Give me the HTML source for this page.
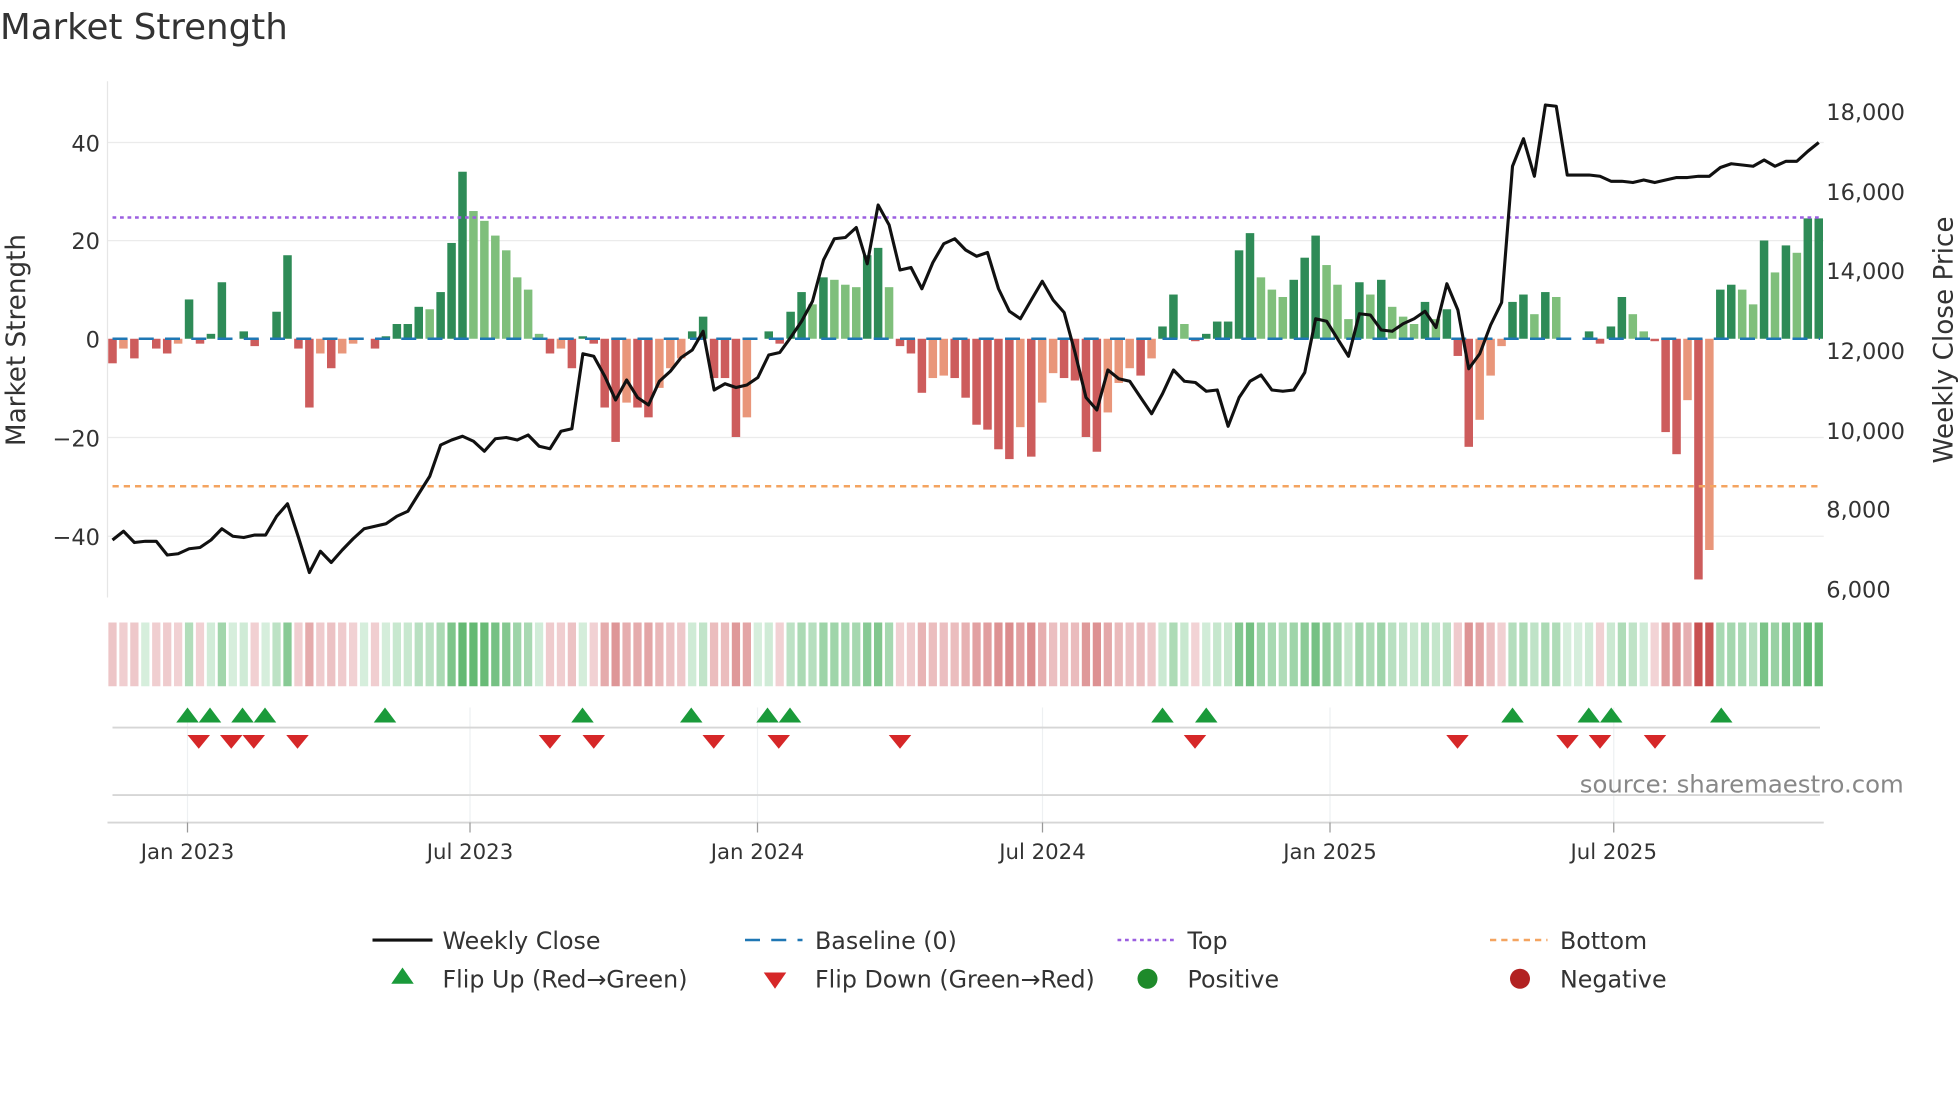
<!DOCTYPE html>
<html><head><meta charset="utf-8"><style>
html,body{margin:0;padding:0;background:#fff;}
svg{display:block;font-family:"DejaVu Sans","Liberation Sans",sans-serif;}
</style></head><body>
<svg id="s" width="1960" height="1102" viewBox="0 0 1568 881.6" xmlns="http://www.w3.org/2000/svg">
<rect width="1568" height="882" fill="#fff"/>
<text x="0" y="31" font-size="28.5" fill="#333">Market Strength</text>
<g id="grid" stroke="#ebebeb" stroke-width="1">
<line x1="86" x2="1459" y1="114" y2="114"/><line x1="86" x2="1459" y1="192.5" y2="192.5"/>
<line x1="86" x2="1459" y1="350" y2="350"/><line x1="86" x2="1459" y1="429" y2="429"/>
</g>
<line x1="86" x2="86" y1="65" y2="478" stroke="#e6e6e6"/>
<g font-size="18" fill="#333" text-anchor="end">
<text x="80" y="121">40</text><text x="80" y="199">20</text><text x="80" y="278">0</text>
<text x="80" y="357">−20</text><text x="80" y="436">−40</text>
</g>
<g font-size="18" fill="#333">
<text x="1461" y="96">18,000</text><text x="1461" y="160">16,000</text><text x="1461" y="223">14,000</text>
<text x="1461" y="287">12,000</text><text x="1461" y="351">10,000</text><text x="1461" y="414">8,000</text><text x="1461" y="478">6,000</text>
</g>
<text transform="translate(20,272) rotate(-90)" font-size="21" fill="#333" text-anchor="middle">Market Strength</text>
<text transform="translate(1562,272) rotate(-90)" font-size="21" fill="#333" text-anchor="middle">Weekly Close Price</text>
<g id="bars"></g>
<line x1="90" x2="1456" y1="271" y2="271" stroke="#1f77b4" stroke-width="2" stroke-dasharray="12,9"/>
<line x1="90" x2="1456" y1="174" y2="174" stroke="#9b5fe0" stroke-width="2" stroke-dasharray="3,3"/>
<line x1="90" x2="1456" y1="389" y2="389" stroke="#f4a460" stroke-width="2" stroke-dasharray="5,4"/>
<polyline id="price" fill="none" stroke="#111" stroke-width="2.5" stroke-linejoin="round"/>
<g id="heat"></g>
<g stroke="#eef0f2" stroke-width="1">
<line x1="150" x2="150" y1="566" y2="658"/><line x1="376" x2="376" y1="566" y2="658"/><line x1="606" x2="606" y1="566" y2="658"/>
<line x1="834" x2="834" y1="566" y2="658"/><line x1="1064" x2="1064" y1="566" y2="658"/><line x1="1291" x2="1291" y1="566" y2="658"/>
</g>
<line x1="90" x2="1456" y1="582" y2="582" stroke="#d6d6d6" stroke-width="1.5"/>
<line x1="90" x2="1456" y1="636" y2="636" stroke="#d6d6d6" stroke-width="1.5"/>
<line x1="86" x2="1459" y1="658" y2="658" stroke="#d6d6d6" stroke-width="1.5"/>
<g id="tri"></g>
<text x="1523" y="634" font-size="19.5" fill="#888" text-anchor="end">source: sharemaestro.com</text>
<g stroke="#999" stroke-width="1">
<line x1="150" x2="150" y1="658" y2="666"/><line x1="376" x2="376" y1="658" y2="666"/><line x1="606" x2="606" y1="658" y2="666"/>
<line x1="834" x2="834" y1="658" y2="666"/><line x1="1064" x2="1064" y1="658" y2="666"/><line x1="1291" x2="1291" y1="658" y2="666"/>
</g>
<g font-size="17" fill="#333" text-anchor="middle">
<text x="150" y="687">Jan 2023</text><text x="376" y="687">Jul 2023</text><text x="606" y="687">Jan 2024</text>
<text x="834" y="687">Jul 2024</text><text x="1064" y="687">Jan 2025</text><text x="1291" y="687">Jul 2025</text>
</g>
<g font-size="19" fill="#333">
<line x1="298" x2="346" y1="752" y2="752" stroke="#111" stroke-width="2.5"/><text x="354" y="759">Weekly Close</text>
<line x1="596" x2="642" y1="752" y2="752" stroke="#1f77b4" stroke-width="2" stroke-dasharray="12,9"/><text x="652" y="759">Baseline (0)</text>
<line x1="894" x2="940" y1="752" y2="752" stroke="#9b5fe0" stroke-width="2" stroke-dasharray="3,3"/><text x="950" y="759">Top</text>
<line x1="1192" x2="1238" y1="752" y2="752" stroke="#f4a460" stroke-width="2" stroke-dasharray="5,4"/><text x="1248" y="759">Bottom</text>
<polygon points="322,774 313,787 331,787" fill="#1a9a3a"/><text x="354" y="790">Flip Up (Red→Green)</text>
<polygon points="611,778 629,778 620,791" fill="#d62728"/><text x="652" y="790">Flip Down (Green→Red)</text>
<circle cx="918" cy="783" r="8" fill="#1e8a2a"/><text x="950" y="790">Positive</text>
<circle cx="1216" cy="783" r="8" fill="#b22222"/><text x="1248" y="790">Negative</text>
</g>
</svg>
<script>
var v=[-5,-2,-4,0,-2,-3,-1,8,-1,1,11.5,0,1.5,-1.5,0,5.5,17,-2,-14,-3,-6,-3,-1,0,-2,0.5,3,3,6.5,6,9.5,19.5,34,26,24,21,18,12.5,10,1,-3,-2,-6,0.5,-1,-14,-21,-13,-14,-16,-10,-6,-4,1.5,4.5,-8,-8,-20,-16,0,1.5,-1,5.5,9.5,7,12.5,12,11,10.5,17,18.5,10.5,-1.5,-3,-11,-8,-7.5,-8,-12,-17.5,-18.5,-22.5,-24.5,-18,-24,-13,-7,-8,-8.5,-20,-23,-15,-9,-6,-7.5,-4,2.5,9,3,-0.5,1,3.5,3.5,18,21.5,12.5,10,8.5,12,16.5,21,15,11,4,11.5,9,12,6.5,4.5,3,7.5,4,6,-3.5,-22,-16.5,-7.5,-1.5,7.5,9,5,9.5,8.5,0,0,1.5,-1,2.5,8.5,5,1.5,-0.5,-19,-23.5,-12.5,-49,-43,10,11,10,7,20,13.5,19,17.5,24.5,24.5];
var p=[432,425,434,433,433,444,443,439,438,432,423,429,430,428,428,413,403,430,458,441,450,440,431,423,421,419,413,409,395,381,356,352,349,353,361,351,350,352,348,357,359,345,343,283,285,301,320,304,318,324,305,297,286,280,265,312,307,310,308,302,284,282,270,257,241,208,191,190,182,211,164,180,216,214,231,210,195,191,200,205,202,231,249,255,240,225,240,250,282,318,328,296,303,305,318,331,315,296,305,306,313,312,341,318,305,300,312,313,312,298,255,257,271,285,251,252,264,265,259,255,249,262,227,248,295,283,260,242,133,111,141,84,85,140,140,140,141,145,145,146,144,146,144,142,142,141,141,134,131,132,133,128,133,129,129,121,114];
var NS="http://www.w3.org/2000/svg",dx=(1455-90)/(v.length-1);
function el(g,t,a){var e=document.createElementNS(NS,t);for(var k in a)e.setAttribute(k,a[k]);document.getElementById(g).appendChild(e);}
function mix(a,b,t){return "rgb("+a.map(function(x,i){return Math.round(x+(b[i]-x)*t)}).join(",")+")";}
for(var i=0;i<v.length;i++){var x=90+dx*i,y=v[i],prev=i?v[i-1]:0,c;
 if(y>=0)c=(y>=prev)?"#2e8b57":"#7fbf7b";else c=(y<=prev)?"#cd5c5c":"#e9967a";
 var h=Math.abs(y)*3.93;
 if(h>0.3)el("bars","rect",{x:x-3.4,width:6.8,y:y>=0?271-h:271,height:h,fill:c});
 var t=Math.min(1,Math.abs(y)/25),col=y>=0?mix([214,238,220],[100,185,115],t):mix([242,212,214],[200,80,80],Math.min(1,Math.abs(y)/45));
 el("heat","rect",{x:x-3.3,width:6.6,y:498,height:51,fill:col});}
var pts=[];for(var i=0;i<p.length;i++)pts.push((90+dx*i).toFixed(1)+","+p[i]);
document.getElementById("price").setAttribute("points",pts.join(" "));
[150,168,194,212,308,466,553,614,632,930,965,1210,1271,1289,1377].forEach(function(x){el("tri","polygon",{points:x+",566 "+(x-9)+",578 "+(x+9)+",578",fill:"#1a9a3a"});});
[159,185,203,238,440,475,571,623,720,956,1166,1254,1280,1324].forEach(function(x){el("tri","polygon",{points:(x-9)+",588 "+(x+9)+",588 "+x+",599",fill:"#d62728"});});
</script>
</body></html>
